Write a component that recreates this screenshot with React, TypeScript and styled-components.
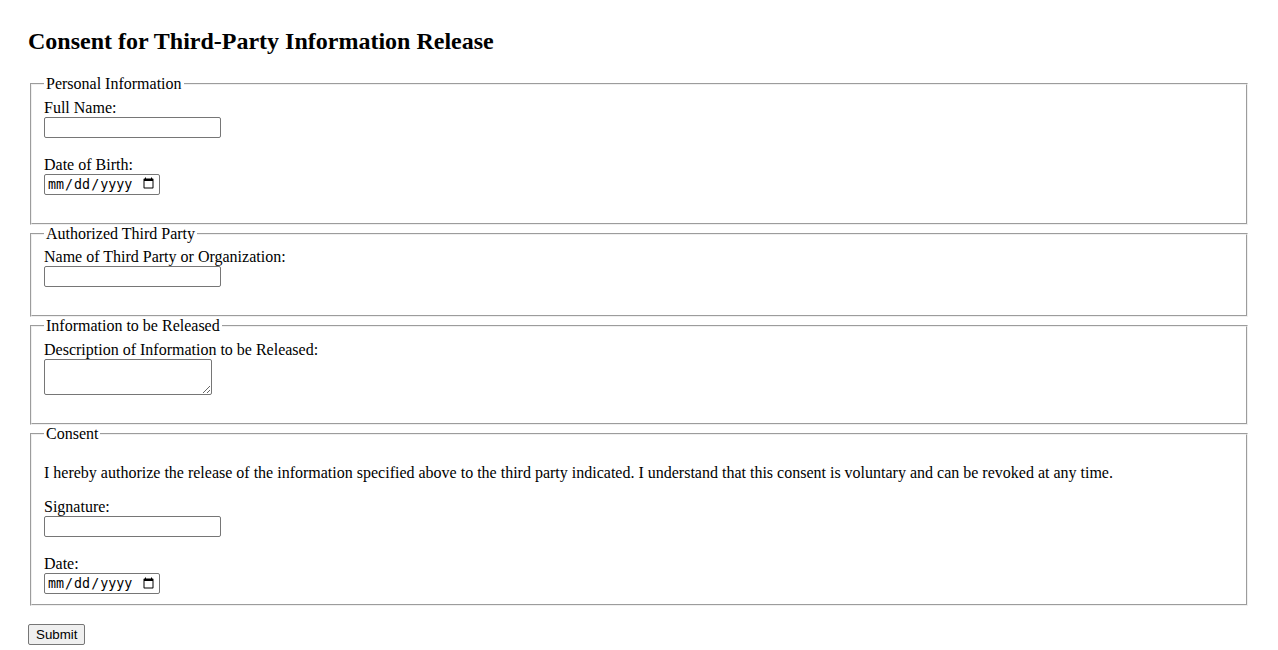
import React from "react";
import styled, { createGlobalStyle } from "styled-components";

const GlobalStyle = createGlobalStyle`
  html, body {
    margin: 0;
    padding: 0;
    background: #ffffff;
  }
  body {
    font-family: "Liberation Serif", "Times New Roman", serif;
    font-size: 16px;
    color: #000000;
  }
`;

const Page = styled.div`
  padding: 28px;
`;

const Title = styled.h2`
  font-size: 24px;
  font-weight: bold;
  margin: 0 0 19.92px;
  line-height: 27px;
`;

const Form = styled.form`
  display: block;
`;

const Section = styled.fieldset`
  margin: 0 2px;
  padding: 5.6px 12px 10px;
  border: 2px groove #f0f0f0;
  min-inline-size: min-content;
`;

const Legend = styled.legend`
  padding: 0 2px;
  line-height: 18px;
`;

const Field = styled.div<{ $last?: boolean }>`
  margin-bottom: ${(p) => (p.$last ? "0" : "18px")};
`;

const Label = styled.label`
  display: block;
  line-height: 18px;
`;

const TextInput = styled.input`
  display: block;
  box-sizing: border-box;
  width: 177px;
  height: 21px;
  margin: 0;
  padding: 1px 2px;
  border: 1px solid #767676;
  border-radius: 2px;
  font-family: "Liberation Sans", Arial, sans-serif;
  font-size: 13.333px;
  background: #ffffff;
`;

const DateInput = styled.input`
  display: block;
  box-sizing: border-box;
  width: 116px;
  height: 21px;
  margin: 0;
  padding: 1px 2px;
  border: 1px solid #767676;
  border-radius: 2px;
  font-family: "DejaVu Sans Mono", "Liberation Mono", monospace;
  font-size: 13.333px;
  color: #000000;
  background: #ffffff;
`;

const TextArea = styled.textarea`
  display: block;
  box-sizing: border-box;
  width: 168px;
  height: 36px;
  margin: 0;
  padding: 2px;
  border: 1px solid #767676;
  border-radius: 2px;
  font-family: "DejaVu Sans Mono", "Liberation Mono", monospace;
  font-size: 13.333px;
  background: #ffffff;
`;

const Statement = styled.p`
  margin: 16px 0;
  line-height: 18px;
`;

const SubmitButton = styled.button`
  display: block;
  box-sizing: border-box;
  margin-top: 18px;
  padding: 1px 7px;
  height: 21px;
  border: 1px solid #767676;
  border-radius: 2px;
  background: #efefef;
  font-family: "Liberation Sans", Arial, sans-serif;
  font-size: 13.333px;
  line-height: 15px;
  color: #000000;
`;

export default function App() {
  return (
    <>
      <GlobalStyle />
      <Page>
        <Title>Consent for Third-Party Information Release</Title>
        <Form onSubmit={(e) => e.preventDefault()}>
          <Section>
            <Legend>Personal Information</Legend>
            <Field>
              <Label htmlFor="fullName">Full Name:</Label>
              <TextInput id="fullName" type="text" />
            </Field>
            <Field>
              <Label htmlFor="dob">Date of Birth:</Label>
              <DateInput id="dob" type="date" />
            </Field>
          </Section>
          <Section>
            <Legend>Authorized Third Party</Legend>
            <Field>
              <Label htmlFor="thirdParty">Name of Third Party or Organization:</Label>
              <TextInput id="thirdParty" type="text" />
            </Field>
          </Section>
          <Section>
            <Legend>Information to be Released</Legend>
            <Field>
              <Label htmlFor="infoDesc">Description of Information to be Released:</Label>
              <TextArea id="infoDesc" />
            </Field>
          </Section>
          <Section>
            <Legend>Consent</Legend>
            <Statement>
              I hereby authorize the release of the information specified above to the third party indicated. I understand that this consent is voluntary and can be revoked at any time.
            </Statement>
            <Field>
              <Label htmlFor="signature">Signature:</Label>
              <TextInput id="signature" type="text" />
            </Field>
            <Field $last>
              <Label htmlFor="consentDate">Date:</Label>
              <DateInput id="consentDate" type="date" />
            </Field>
          </Section>
          <SubmitButton type="submit">Submit</SubmitButton>
        </Form>
      </Page>
    </>
  );
}
